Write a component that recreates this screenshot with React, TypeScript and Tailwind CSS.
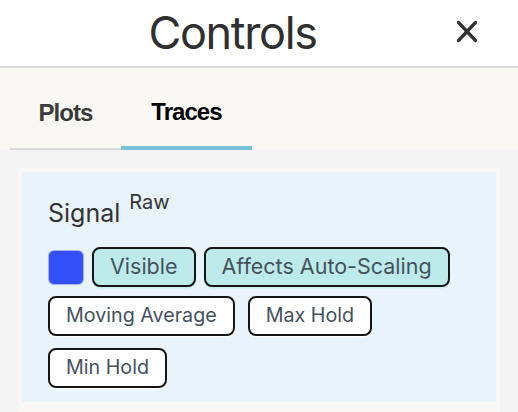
import { useState } from 'react';

const pill =
  'h-[40px] rounded-lg border-2 border-[#151515] px-4 leading-none text-[#45525e] flex items-center';

export default function App() {
  const [tab, setTab] = useState<'plots' | 'traces'>('traces');

  return (
    <div className="w-[518px] h-[412px] overflow-hidden bg-[#f4f4f4] font-['Inter',sans-serif]">
      {/* Header */}
      <div className="flex h-[68px] items-center border-b-2 border-[#d6d6d6] bg-white pl-[9px] pr-[40px]">
        <h1 className="flex-1 text-center font-['Inter',sans-serif] text-[45px] font-normal tracking-[-0.03em] text-[#303030]">
          Controls
        </h1>
        <button aria-label="Close" className="-mt-[3px] text-[#333]">
          <svg width="22" height="23" viewBox="0 0 22 23" fill="none" stroke="currentColor" strokeWidth="3.3" strokeLinecap="round">
            <path d="M2.5 2.5L19.5 20.5" />
            <path d="M19.5 2.5L2.5 20.5" />
          </svg>
        </button>
      </div>

      {/* Tabs */}
      <div className="flex h-[82px] items-end bg-[#f9f8f4] pl-[10px]">
        <button
          onClick={() => setTab('plots')}
          className={`flex h-[82px] w-[111px] items-center justify-center pt-[10px] font-['Liberation_Sans',sans-serif] text-[24px] font-bold tracking-[-0.04em] ${
            tab === 'plots' ? 'border-b-4 border-[#79c3d8] text-black' : 'border-b-2 border-[#d9d9d9] text-[#3a3a3a]'
          }`}
        >
          Plots
        </button>
        <button
          onClick={() => setTab('traces')}
          className={`flex h-[82px] w-[131px] items-center justify-center pt-[10px] font-['Liberation_Sans',sans-serif] text-[24px] font-bold tracking-[-0.04em] ${
            tab === 'traces' ? 'border-b-4 border-[#79c3d8] text-black' : 'border-b-2 border-[#d9d9d9] text-[#3a3a3a]'
          }`}
        >
          Traces
        </button>
      </div>

      {/* Trace list */}
      <div className="px-[18px] pt-[18px]">
        <div className="bg-[#f9f8f4] p-1 pb-[10px]">
          <div className="bg-[#e8f3fc] px-[26px] pt-[25px] pb-[14px]">
            <div className="flex items-start text-[#333]">
              <span className="text-[25px] leading-8">Signal</span>
              <span className="relative -top-[5px] ml-[9px] text-[20px] leading-none">Raw</span>
            </div>

            <div className="mt-[18px] flex items-center gap-2">
              <div className="h-[35px] w-[36px] rounded-md border-[1.5px] border-[#a9b3f2] bg-[#334ff7]" />
              <button className={`${pill} bg-[#bdebeb] text-[21.5px] shadow-[0_1.5px_0_#c8f0f0]`}>Visible</button>
              <button className={`${pill} bg-[#bdebeb] text-[21.5px] shadow-[0_1.5px_0_#c8f0f0]`}>Affects Auto-Scaling</button>
            </div>

            <div className="mt-[9px] flex gap-[13px]">
              <button className={`${pill} bg-white text-[19.7px] shadow-[0_1.5px_0_#ffffff]`}>Moving Average</button>
              <button className={`${pill} bg-white text-[19.7px] shadow-[0_1.5px_0_#ffffff]`}>Max Hold</button>
            </div>

            <div className="mt-3 flex">
              <button className={`${pill} bg-white text-[19.7px] shadow-[0_1.5px_0_#ffffff]`}>Min Hold</button>
            </div>
          </div>
        </div>
      </div>
    </div>
  );
}
